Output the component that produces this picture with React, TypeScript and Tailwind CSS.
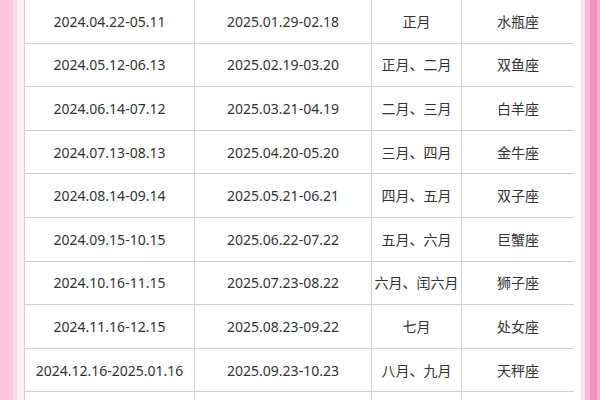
import React from "react";

interface Row {
  lunar: string;
  next: string;
  month: string;
  sign: string;
}

const rows: Row[] = [
  { lunar: "2024.04.22-05.11", next: "2025.01.29-02.18", month: "正月", sign: "水瓶座" },
  { lunar: "2024.05.12-06.13", next: "2025.02.19-03.20", month: "正月、二月", sign: "双鱼座" },
  { lunar: "2024.06.14-07.12", next: "2025.03.21-04.19", month: "二月、三月", sign: "白羊座" },
  { lunar: "2024.07.13-08.13", next: "2025.04.20-05.20", month: "三月、四月", sign: "金牛座" },
  { lunar: "2024.08.14-09.14", next: "2025.05.21-06.21", month: "四月、五月", sign: "双子座" },
  { lunar: "2024.09.15-10.15", next: "2025.06.22-07.22", month: "五月、六月", sign: "巨蟹座" },
  { lunar: "2024.10.16-11.15", next: "2025.07.23-08.22", month: "六月、闰六月", sign: "狮子座" },
  { lunar: "2024.11.16-12.15", next: "2025.08.23-09.22", month: "七月", sign: "处女座" },
  { lunar: "2024.12.16-2025.01.16", next: "2025.09.23-10.23", month: "八月、九月", sign: "天秤座" },
  { lunar: "", next: "", month: "", sign: "" },
];

export default function App() {
  const cell = "border border-[#cfcfcf] text-center align-middle p-0";

  return (
    <div
      className="w-[600px] h-[400px] overflow-hidden flex bg-white text-[#333] text-[14px]"
      style={{ fontFamily: '"Noto Sans", "Noto Sans CJK SC", sans-serif' }}
    >
      {/* left pink edge */}
      <div className="flex shrink-0">
        <div className="w-[13px] bg-[#fbc5dc]" />
        <div className="w-[4px] bg-[#fcdbe9]" />
        <div className="w-[7px] bg-[#fdf1f7]" />
      </div>

      <div className="w-[550px] shrink-0">
        <table className="w-full table-fixed border-collapse -mt-px">
          <colgroup>
            <col className="w-[170px]" />
            <col className="w-[177px]" />
            <col className="w-[90px]" />
            <col className="w-[113px]" />
          </colgroup>
          <tbody>
            {rows.map((r, i) => (
              <tr key={i} className="h-[43.6px]">
                <td className={cell}>{r.lunar}</td>
                <td className={cell}>{r.next}</td>
                <td className={cell}>{r.month}</td>
                <td className={cell}>{r.sign}</td>
              </tr>
            ))}
          </tbody>
        </table>
      </div>

      {/* right pink edge */}
      <div className="flex shrink-0 flex-1">
        <div className="w-[7px] bg-white" />
        <div className="w-[4px] bg-[#fde3ef]" />
        <div className="w-[5px] bg-[#f9bcd8]" />
        <div className="w-[7px] bg-[#f293c3]" />
        <div className="flex-1 bg-[#f7b2d3]" />
      </div>
    </div>
  );
}
